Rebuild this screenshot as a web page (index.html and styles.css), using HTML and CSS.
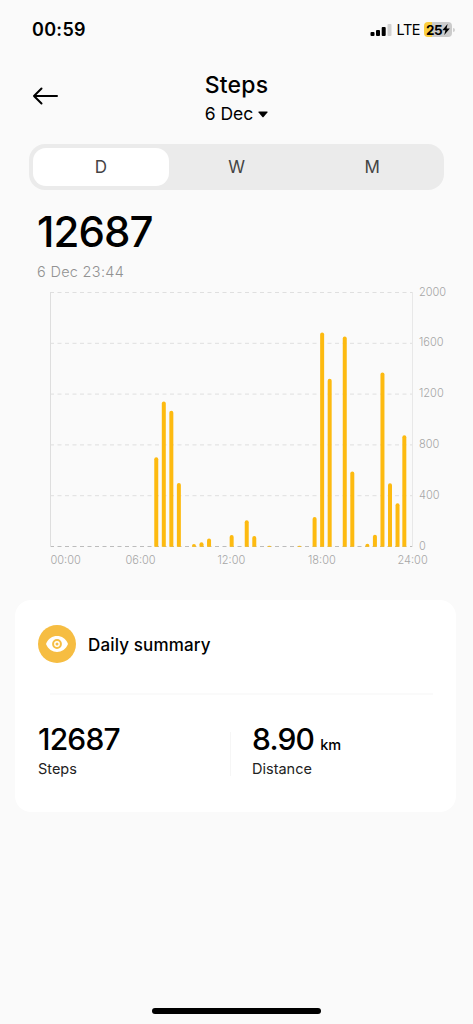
FILE: index.html
```html
<!DOCTYPE html>
<html lang="en">
  <head>
    <meta charset="utf-8" />
    <meta name="viewport" content="width=device-width, initial-scale=1" />
    <title>Steps</title>
    <link rel="stylesheet" href="styles.css">
  </head>
  <body>
    <div class="status-bar">
      <span class="time">00:59</span>
      <div class="status-icons">
        <svg class="signal" width="22" height="12" viewBox="0 0 22 12">
          <rect x="0.5" y="8" width="4" height="4" rx="1" />
          <rect x="6" y="6" width="4" height="6" rx="1" />
          <rect x="11.7" y="3" width="4" height="9" rx="1" />
          <rect x="17.5" y="0" width="4" height="12" rx="1" fill="#d2d2d2" />
        </svg>
        <span class="network">LTE</span>
        <div class="battery">
          <span>25</span>
          <svg width="8" height="11" viewBox="0 0 8 11">
            <path d="M5.6 0 L0.3 6.2 H3.4 L2.3 11 L7.8 4.5 H4.6 Z" />
          </svg>
        </div>
        <span class="battery-tip"></span>
      </div>
    </div>

    <header class="header">
      <svg class="back" width="26" height="18" viewBox="0 0 26 18">
        <path d="M9.5 1.5 L2 9 L9.5 16.5 M2 9 H25" />
      </svg>
      <div class="heading">
        <h1>Steps</h1>
        <div class="date">
          <span>6 Dec</span>
          <svg width="10" height="7" viewBox="0 0 10 7">
            <path d="M1 0.5 H9 Q10 0.7 9.4 1.5 L5.6 6 Q5 6.6 4.4 6 L0.6 1.5 Q0 0.7 1 0.5 Z" />
          </svg>
        </div>
      </div>
    </header>

    <nav class="tabs">
      <div class="tab active">D</div>
      <div class="tab">W</div>
      <div class="tab">M</div>
    </nav>

    <section class="total">
      <div class="total-value">12687</div>
      <div class="total-date">6 Dec 23:44</div>
    </section>

    <svg class="chart" width="473" height="290" viewBox="0 284 473 290">
      <g class="grid">
        <path d="M50 292.5 H412" />
        <path d="M50 343.3 H412" />
        <path d="M50 394.1 H412" />
        <path d="M50 444.9 H412" />
        <path d="M50 495.7 H412" />
        <path class="base" d="M50 546.5 H412" />
      </g>
      <path class="edge" d="M50.5 292 V547" />
      <path class="edge right" d="M412.5 292 V547" />
      <g class="bars" id="bars"></g>
      <g class="labels">
        <text x="419" y="295.5">2000</text>
        <text x="419" y="346.3">1600</text>
        <text x="419" y="397.1">1200</text>
        <text x="419" y="447.9">800</text>
        <text x="419" y="498.7">400</text>
        <text x="419" y="549.5">0</text>
        <text x="50.5" y="564">00:00</text>
        <text x="125.5" y="564">06:00</text>
        <text x="217.5" y="564">12:00</text>
        <text x="308" y="564">18:00</text>
        <text x="397.5" y="564">24:00</text>
      </g>
    </svg>

    <section class="card">
      <div class="card-title">
        <svg width="38" height="38" viewBox="0 0 38 38">
          <circle cx="19" cy="19" r="19" fill="#f6bd42" />
          <path d="M8 19 C12 8.4 26 8.4 30 19 C26 29.6 12 29.6 8 19 Z" fill="#fff" />
          <circle cx="19" cy="19" r="3.9" fill="#fff" stroke="#f6bd42" stroke-width="2" />
          <circle cx="19" cy="19" r="1.5" fill="#f6bd42" />
        </svg>
        <h2>Daily summary</h2>
      </div>
      <div class="divider"></div>
      <div class="stats">
        <div class="stat">
          <div class="stat-value">12687</div>
          <div class="stat-label">Steps</div>
        </div>
        <div class="stat">
          <div class="stat-value">8.90<span class="unit">km</span></div>
          <div class="stat-label">Distance</div>
        </div>
      </div>
    </section>

    <div class="home-bar"></div>

    <script>
      // half hour slot, steps
      const data = [
        [14, 705], [15, 1145], [16, 1072], [17, 503], [19, 22], [20, 36],
        [21, 66], [24, 92], [26, 210], [27, 85], [29, 8], [33, 8],
        [35, 235], [36, 1688], [37, 1324], [39, 1655], [40, 592], [42, 25],
        [43, 95], [44, 1372], [45, 500], [46, 342], [46.9, 878],
      ];
      const bars = document.getElementById("bars");
      data.forEach(([slot, steps]) => {
        const x = 50.7 + slot * 7.54;
        const top = 546.8 - (steps / 2000) * 254;
        const r = Math.min(2, 546.8 - top);
        const path = document.createElementNS("http://www.w3.org/2000/svg", "path");
        path.setAttribute(
          "d",
          `M${x - 2} 546.8 V${top + r} Q${x - 2} ${top} ${x} ${top} Q${x + 2} ${top} ${x + 2} ${top + r} V546.8 Z`
        );
        bars.appendChild(path);
      });
    </script>
  </body>
</html>
```
FILE: styles.css
```css
* {
  box-sizing: border-box;
}

body {
  margin: 0;
  height: 1024px;
  display: flex;
  flex-direction: column;
  overflow: hidden;
  font-family: Inter, "Liberation Sans", sans-serif;
  background: #fafafa;
  color: #000;
}

svg {
  display: block;
}

h1,
h2 {
  margin: 0;
  font-weight: 500;
}

.status-bar {
  height: 59px;
  padding: 0 18px 0 32px;
  display: flex;
  justify-content: space-between;
  align-items: center;
}

.time {
  font-size: 18px;
  font-weight: 600;
  letter-spacing: 0.3px;
}

.status-icons {
  display: flex;
  align-items: center;
}

.network {
  margin-left: 5px;
  font-size: 14.5px;
  letter-spacing: -0.5px;
}

.battery {
  width: 28px;
  height: 15px;
  margin-left: 4px;
  display: flex;
  align-items: center;
  justify-content: center;
  border-radius: 4px;
  background: linear-gradient(to right, #fbce3f 8px, #cbcbcb 8px);
  font-size: 13.5px;
  font-weight: 700;
  letter-spacing: -0.5px;
}

.battery-tip {
  width: 2px;
  height: 4px;
  margin-left: 1px;
  border-radius: 0 2px 2px 0;
  background: #cfcfcf;
}

.header {
  height: 85px;
  padding: 12px 32px 0;
  display: grid;
  grid-template-columns: 1fr auto 1fr;
}

.back {
  margin-top: 16px;
  fill: none;
  stroke: #000;
  stroke-width: 2;
  stroke-linecap: round;
  stroke-linejoin: round;
}

.heading h1 {
  font-size: 23px;
  line-height: 28px;
  letter-spacing: 0.2px;
}

.date {
  margin-top: 4px;
  display: flex;
  align-items: center;
  gap: 5px;
  font-size: 17.5px;
  line-height: 22px;
}

.tabs {
  height: 46px;
  margin: 0 29px;
  padding: 4px;
  display: flex;
  border-radius: 16px;
  background: #ebebeb;
}

.tab {
  flex: 1;
  line-height: 38px;
  text-align: center;
  font-size: 17px;
  color: #444;
}

.active {
  border-radius: 13px;
  background: #fff;
}

.total {
  height: 94px;
  padding: 18px 0 0 37px;
}

.total-value {
  font-size: 42px;
  font-weight: 500;
  line-height: 48px;
  letter-spacing: -0.9px;
}

.total-date {
  margin-top: 6px;
  font-size: 14.5px;
  font-weight: 300;
  line-height: 20px;
  letter-spacing: 0.3px;
  color: #929292;
}

.grid path {
  stroke: #dfdfdf;
  stroke-width: 1;
  stroke-dasharray: 4 3.5;
}

.grid .base {
  stroke: #bcbcbc;
}

.edge {
  stroke: #dedede;
}

.right {
  stroke: #e8e8e8;
}

.bars {
  fill: #fdba10;
}

.labels {
  font-size: 11px;
  font-weight: 300;
  fill: #a6a6a6;
}

.card {
  width: 441px;
  height: 212px;
  margin: 26px 0 0 15px;
  padding: 25px 23px 0;
  border-radius: 16px;
  background: #fff;
}

.card-title {
  display: flex;
  align-items: center;
  gap: 12px;
}

.card-title h2 {
  margin-top: 2px;
  font-size: 17px;
  letter-spacing: 0.15px;
}

.divider {
  height: 2px;
  margin: 30px 0 0 12px;
  background: #fafafa;
}

.stats {
  margin-top: 27px;
  display: grid;
  grid-template-columns: 192px 1fr;
}

.stat + .stat {
  padding-left: 22px;
  background: linear-gradient(#f6f6f6, #f6f6f6) 0 10px / 1px 44px no-repeat;
}

.stat-value {
  height: 34px;
  font-size: 30px;
  font-weight: 500;
  line-height: 34px;
  letter-spacing: -0.8px;
}

.unit {
  margin-left: 6px;
  font-size: 14.5px;
  line-height: 1;
  letter-spacing: 0;
}

.stat-label {
  margin-top: 3px;
  font-size: 14.5px;
  line-height: 20px;
  color: #222;
}

.home-bar {
  width: 169px;
  height: 6px;
  margin: auto auto 10px;
  border-radius: 3px;
  background: #000;
}
```
